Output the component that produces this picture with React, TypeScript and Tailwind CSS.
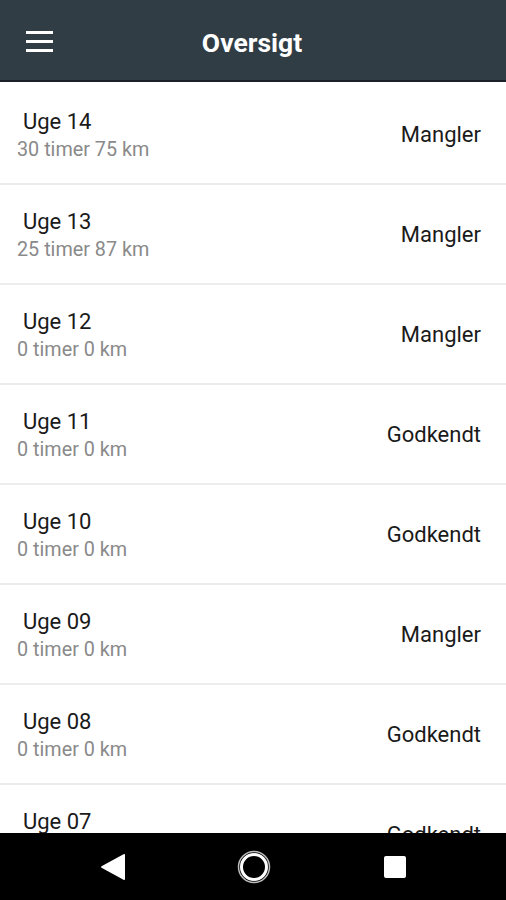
import React from "react";

const rows = [
  { t: "Uge 14", s: "30 timer 75 km", r: "Mangler" },
  { t: "Uge 13", s: "25 timer 87 km", r: "Mangler" },
  { t: "Uge 12", s: "0 timer 0 km", r: "Mangler" },
  { t: "Uge 11", s: "0 timer 0 km", r: "Godkendt" },
  { t: "Uge 10", s: "0 timer 0 km", r: "Godkendt" },
  { t: "Uge 09", s: "0 timer 0 km", r: "Mangler" },
  { t: "Uge 08", s: "0 timer 0 km", r: "Godkendt" },
  { t: "Uge 07", s: "0 timer 0 km", r: "Godkendt" },
];

export default function App() {
  return (
    <div
      className="flex h-[900px] w-[506px] flex-col overflow-hidden bg-white"
      style={{ fontFamily: "Roboto, 'Noto Sans', sans-serif" }}
    >
      <div className="relative flex h-[82px] shrink-0 items-center border-b-2 border-[#1c2129] bg-[#303d45]">
        <div className="ml-[26px] mt-[2px] flex w-[27px] flex-col gap-[6px]">
          <div className="h-[3px] bg-white" />
          <div className="h-[3px] bg-white" />
          <div className="h-[3px] bg-white" />
        </div>
        <div className="absolute left-0 right-0 top-[3px] flex h-[80px] items-center justify-center pr-[2px] text-[26.5px] font-bold text-white">
          Oversigt
        </div>
      </div>
      <div className="flex-1 overflow-hidden pt-[3px]">
        {rows.map((row) => (
          <div
            key={row.t}
            className="flex h-[100px] items-center justify-between border-b-2 border-[#ececec] pl-[17px] pr-[25px]"
          >
            <div className="mt-[6px] flex flex-col">
              <div className="pl-[6px] text-[22px] leading-[26px] text-[#1a1a1a]">{row.t}</div>
              <div className="text-[19.8px] leading-[30px] text-[#8a8a8a]">{row.s}</div>
            </div>
            <div className="text-[22px] text-[#1a1a1a]">{row.r}</div>
          </div>
        ))}
      </div>
      <div className="flex h-[67px] shrink-0 items-center bg-black">
        <div className="flex w-[100px] shrink-0" />
        <svg width="26" height="28" viewBox="0 0 26 28" className="shrink-0">
          <path d="M25 2 L25 26 Q25 27.5 23.5 26.7 L1.5 14.8 Q0.5 14 1.5 13.2 L23.5 1.3 Q25 0.5 25 2 Z" fill="white" />
        </svg>
        <div className="flex w-[111px] shrink-0" />
        <svg width="34" height="34" viewBox="0 0 34 34" className="shrink-0">
          <circle cx="17" cy="17" r="15.5" fill="none" stroke="#bdbdbd" strokeWidth="1.5" />
          <circle cx="17" cy="17" r="12.5" fill="none" stroke="white" strokeWidth="3" />
        </svg>
        <div className="flex w-[113px] shrink-0" />
        <div className="h-[22px] w-[22px] shrink-0 rounded-[2px] bg-white" />
      </div>
    </div>
  );
}
